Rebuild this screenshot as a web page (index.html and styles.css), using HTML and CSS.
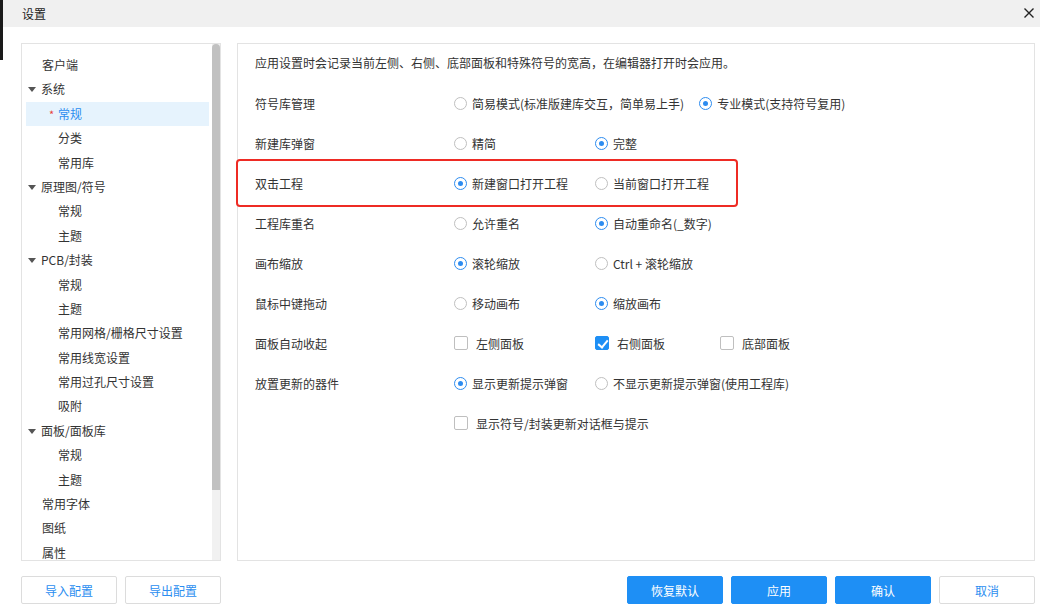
FILE: index.html
```html
<!DOCTYPE html>
<html>

<head>
    <meta charset="utf-8">
    <title>设置</title>
    <link rel="stylesheet" href="styles.css">
</head>

<body>
    <div class="titlebar">
        <span>设置</span>
        <svg class="close" width="10" height="10" viewBox="0 0 10 10">
            <path d="M0.5 0.5 L9.5 9.5 M9.5 0.5 L0.5 9.5" stroke="#222" stroke-width="1.4" fill="none" />
        </svg>
    </div>

    <div class="content">
        <div class="sidebar">
            <ul class="tree">
                <li class="lv1">客户端</li>
                <li class="lv1 group"><i class="arrow"></i>系统</li>
                <li class="lv2 active"><span class="star">*</span>常规</li>
                <li class="lv2">分类</li>
                <li class="lv2">常用库</li>
                <li class="lv1 group"><i class="arrow"></i>原理图/符号</li>
                <li class="lv2">常规</li>
                <li class="lv2">主题</li>
                <li class="lv1 group"><i class="arrow"></i>PCB/封装</li>
                <li class="lv2">常规</li>
                <li class="lv2">主题</li>
                <li class="lv2">常用网格/栅格尺寸设置</li>
                <li class="lv2">常用线宽设置</li>
                <li class="lv2">常用过孔尺寸设置</li>
                <li class="lv2">吸附</li>
                <li class="lv1 group"><i class="arrow"></i>面板/面板库</li>
                <li class="lv2">常规</li>
                <li class="lv2">主题</li>
                <li class="lv1">常用字体</li>
                <li class="lv1">图纸</li>
                <li class="lv1">属性</li>
            </ul>
            <div class="scrollbar">
                <div class="thumb"></div>
            </div>
        </div>

        <div class="panel">
            <p class="desc">应用设置时会记录当前左侧、右侧、底部面板和特殊符号的宽高，在编辑器打开时会应用。</p>

            <div class="row">
                <div class="label">符号库管理</div>
                <label class="opt"><i class="radio"></i>简易模式(标准版建库交互，简单易上手)</label>
                <label class="opt"><i class="radio on"></i>专业模式(支持符号复用)</label>
            </div>
            <div class="row">
                <div class="label">新建库弹窗</div>
                <label class="opt"><i class="radio"></i>精简</label>
                <label class="opt"><i class="radio on"></i>完整</label>
            </div>
            <div class="row marked">
                <div class="label">双击工程</div>
                <label class="opt"><i class="radio on"></i>新建窗口打开工程</label>
                <label class="opt"><i class="radio"></i>当前窗口打开工程</label>
            </div>
            <div class="row">
                <div class="label">工程库重名</div>
                <label class="opt"><i class="radio"></i>允许重名</label>
                <label class="opt"><i class="radio on"></i>自动重命名(_数字)</label>
            </div>
            <div class="row">
                <div class="label">画布缩放</div>
                <label class="opt"><i class="radio on"></i>滚轮缩放</label>
                <label class="opt"><i class="radio"></i>Ctrl + 滚轮缩放</label>
            </div>
            <div class="row">
                <div class="label">鼠标中键拖动</div>
                <label class="opt"><i class="radio"></i>移动画布</label>
                <label class="opt"><i class="radio on"></i>缩放画布</label>
            </div>
            <div class="row">
                <div class="label">面板自动收起</div>
                <label class="opt"><i class="check"></i>左侧面板</label>
                <label class="opt narrow"><i class="check on"></i>右侧面板</label>
                <label class="opt"><i class="check"></i>底部面板</label>
            </div>
            <div class="row">
                <div class="label">放置更新的器件</div>
                <label class="opt"><i class="radio on"></i>显示更新提示弹窗</label>
                <label class="opt"><i class="radio"></i>不显示更新提示弹窗(使用工程库)</label>
            </div>
            <div class="row">
                <div class="label"></div>
                <label class="opt"><i class="check"></i>显示符号/封装更新对话框与提示</label>
            </div>
        </div>
    </div>

    <div class="footer">
        <div class="btns">
            <button class="btn">导入配置</button>
            <button class="btn">导出配置</button>
        </div>
        <div class="btns">
            <button class="btn primary">恢复默认</button>
            <button class="btn primary">应用</button>
            <button class="btn primary">确认</button>
            <button class="btn">取消</button>
        </div>
    </div>
</body>

</html>
```

FILE: styles.css
```css
body {
    margin: 0;
    font-family: "Noto Sans CJK SC", "Noto Sans", sans-serif;
    font-size: 12px;
    color: #333;
    background: #fff linear-gradient(#1a1a1a, #1a1a1a) no-repeat 0 0 / 3px 60px;
    width: 1040px;
    height: 612px;
    overflow: hidden;
}

.titlebar {
    height: 27px;
    background: #f0f0f0 linear-gradient(#1a1a1a, #1a1a1a) no-repeat 0 0 / 3px 27px;
    display: flex;
    align-items: center;
    justify-content: space-between;
    padding: 0 6px 0 22px;
    color: #222;
}

.close {
    margin-top: -2px;
}

.content {
    display: flex;
    gap: 16px;
    padding: 16px 5px 0 21px;
}

/* left tree */

.sidebar {
    width: 200px;
    height: 518px;
    box-sizing: border-box;
    border: 1px solid #e3e3e3;
    display: flex;
    overflow: hidden;
}

.tree {
    flex: 1;
    list-style: none;
    margin: 0;
    padding: 9px 0 0 0;
}

.tree li {
    height: 24.4px;
    line-height: 24.4px;
    margin: 0 3px 0 4px;
    white-space: nowrap;
    display: flex;
    align-items: center;
}

.tree .lv1 {
    padding-left: 16px;
}

.tree .group {
    padding-left: 2px;
}

.tree .lv2 {
    padding-left: 32px;
}

.tree .active {
    background-color: #e6f3fd;
    color: #2b8ef0;
}

.star {
    color: #e8403a;
    margin-left: -9px;
    width: 9px;
    font-size: 11px;
}

.arrow {
    width: 0;
    height: 0;
    border-left: 4px solid transparent;
    border-right: 4px solid transparent;
    border-top: 5px solid #555;
    margin-right: 5px;
}

.scrollbar {
    width: 8px;
    background-color: #f1f1f1;
}

.scrollbar .thumb {
    height: 446px;
    background-color: #c1c1c1;
    border-radius: 4px 4px 0 0;
}

/* right panel */

.panel {
    flex: 1;
    height: 518px;
    box-sizing: border-box;
    border: 1px solid #e3e3e3;
}

.desc {
    margin: 0 0 10px;
    padding: 9px 0 0 17px;
    line-height: 20px;
}

.row {
    position: relative;
    height: 40px;
    display: flex;
    align-items: center;
    padding-left: 17px;
}

.row.marked::after {
    content: "";
    position: absolute;
    left: -2px;
    top: -4px;
    width: 502px;
    height: 48px;
    box-sizing: border-box;
    border: 2px solid #ee2b24;
    border-radius: 4px;
}

.label {
    width: 199px;
}

.opt {
    display: flex;
    align-items: center;
    min-width: 141px;
    padding-right: 15px;
    box-sizing: border-box;
    white-space: nowrap;
}

.opt.narrow {
    min-width: 125px;
}

.radio {
    width: 13px;
    height: 13px;
    box-sizing: border-box;
    border: 1px solid #bfbfbf;
    border-radius: 50%;
    margin-right: 5px;
    display: flex;
    align-items: center;
    justify-content: center;
}

.radio.on {
    border-color: #2d8cf0;
}

.radio.on::after {
    content: "";
    width: 5px;
    height: 5px;
    border-radius: 50%;
    background-color: #2d8cf0;
}

.check {
    width: 14px;
    height: 14px;
    box-sizing: border-box;
    border: 1px solid #bfbfbf;
    border-radius: 2px;
    margin-right: 8px;
    position: relative;
}

.check.on {
    background-color: #1e8ff5;
    border-color: #1e8ff5;
}

.check.on::after {
    content: "";
    position: absolute;
    left: 4px;
    top: 1px;
    width: 4px;
    height: 8px;
    border: solid #fff;
    border-width: 0 2px 2px 0;
    transform: rotate(40deg);
}

/* footer buttons */

.footer {
    display: flex;
    justify-content: space-between;
    padding: 15px 5px 0 21px;
}

.btns {
    display: flex;
    gap: 8px;
}

.btn {
    width: 96px;
    height: 28px;
    font-family: inherit;
    font-size: 12px;
    background-color: #fff;
    color: #2b8ef0;
    border: 1px solid #dcdcdc;
    border-radius: 2px;
    cursor: pointer;
}

.btn.primary {
    background-color: #1e8ff5;
    border-color: #1e8ff5;
    color: #fff;
}
```
